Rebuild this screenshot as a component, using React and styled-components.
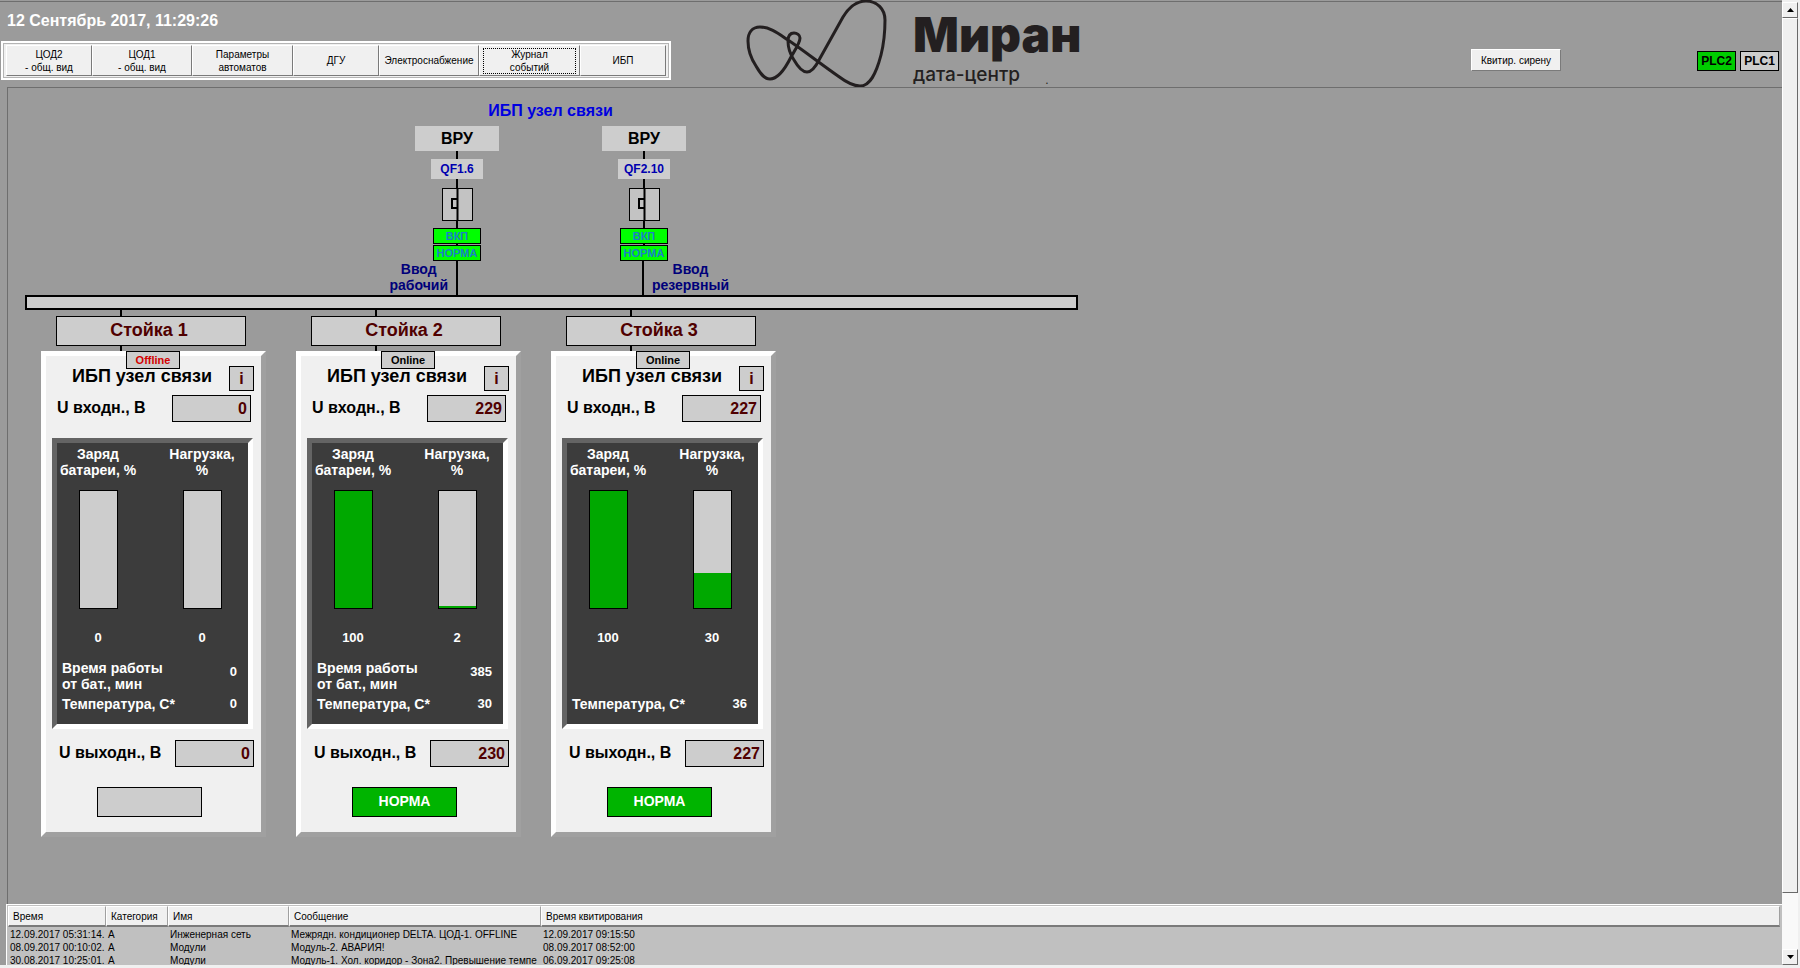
import React from 'react';
import styled, { createGlobalStyle } from 'styled-components';

const navItems = [
  { lines: ['ЦОД2', '- общ. вид'], width: 86 },
  { lines: ['ЦОД1', '- общ. вид'], width: 100 },
  { lines: ['Параметры', 'автоматов'], width: 101 },
  { lines: ['ДГУ'], width: 86 },
  { lines: ['Электроснабжение'], width: 100 },
  { lines: ['Журнал', 'событий'], width: 101, focused: true },
  { lines: ['ИБП'], width: 86 },
];

const feeds = [
  { breaker: 'QF1.6', label: ['Ввод', 'рабочий'], side: 'left' },
  { breaker: 'QF2.10', label: ['Ввод', 'резервный'], side: 'right' },
];

const racks = [
  { id: 1, online: false, input: 0, output: 0, charge: 0, load: 0, runtime: 0, temp: 0 },
  { id: 2, online: true, input: 229, output: 230, charge: 100, load: 2, runtime: 385, temp: 30 },
  { id: 3, online: true, input: 227, output: 227, charge: 100, load: 30, temp: 36 },
];

const events = [
  ['12.09.2017 05:31:14.', 'A', 'Инженерная сеть', 'Межрядн. кондиционер DELTA. ЦОД-1. OFFLINE', '12.09.2017 09:15:50'],
  ['08.09.2017 00:10:02.', 'A', 'Модули', 'Модуль-2. АВАРИЯ!', '08.09.2017 08:52:00'],
  ['30.08.2017 10:25:01.', 'A', 'Модули', 'Модуль-1. Хол. коридор - Зона2. Превышение темпе', '06.09.2017 09:25:08'],
];

const Lines = ({ lines }) =>
  lines.map((line, i) => (
    <React.Fragment key={line}>
      {i > 0 && <br />}
      {line}
    </React.Fragment>
  ));

const Logo = () => (
  <LogoWrap>
    <LogoMark viewBox="0 0 142 88" aria-hidden="true">
      <path
        d="M24 79 C33 79 40 67 45 57 C49 50 54 43 54 38 C54 35 51 33 48 33 C44 33 42 36 42 41 C42 47 44 54 48 60 C52 67 56 72 61 72 C66 72 70 66 73 60 L97 17 C103 7 110 1 120 1 C131 1 139 9 139 20 C139 32 138 43 135 55 C130 74 124 86 114 86 C107 86 100 82 92 76 C72 62 57 50 42 40 C33 34 24 27 14 27 C6 27 2 33 2 41 C2 50 6 60 10 66 C14 73 18 79 24 79 Z"
        fill="none"
        stroke="#231f20"
        strokeWidth="3"
        strokeLinejoin="round"
      />
    </LogoMark>
    <LogoText>
      <strong>Миран</strong>
      <span>дата-центр</span>
    </LogoText>
    <LogoDot>.</LogoDot>
  </LogoWrap>
);

const Feed = ({ feed }) => (
  <FeedColumn>
    <Source>ВРУ</Source>
    <Wire $height={8} />
    <BreakerName>{feed.breaker}</BreakerName>
    <Wire $height={9} />
    <Breaker>
      <svg width="29" height="31" viewBox="0 0 29 31" aria-hidden="true">
        <path d="M14.5 0 V31 M14 10 H9 V19 H14" fill="none" stroke="#000" strokeWidth="2" />
      </svg>
    </Breaker>
    <Wire $height={7} />
    <FeedState>ВКП</FeedState>
    <Wire $height={1} />
    <FeedState>НОРМА</FeedState>
    <FeedTail>
      <FeedLabel $side="left">{feed.side === 'left' && <Lines lines={feed.label} />}</FeedLabel>
      <Wire $height={34} />
      <FeedLabel $side="right">{feed.side === 'right' && <Lines lines={feed.label} />}</FeedLabel>
    </FeedTail>
  </FeedColumn>
);

const Gauge = ({ lines, value }) => (
  <GaugeColumn>
    <GaugeLabel>
      <Lines lines={lines} />
    </GaugeLabel>
    <GaugeBar>
      <GaugeFill style={{ height: `${value}%` }} />
    </GaugeBar>
    <span>{value}</span>
  </GaugeColumn>
);

const Rack = ({ rack }) => (
  <RackColumn>
    <RackWire $height={6} />
    <RackName>Стойка {rack.id}</RackName>
    <RackWire $height={5} />
    <Card>
      <Badge $online={rack.online}>{rack.online ? 'Online' : 'Offline'}</Badge>
      <CardHead>
        <h2>ИБП узел связи</h2>
        <InfoButton type="button">i</InfoButton>
      </CardHead>
      <InputRow>
        <label htmlFor={`in-${rack.id}`}>U входн., В</label>
        <Field id={`in-${rack.id}`} value={rack.input} readOnly />
      </InputRow>
      <Display>
        <Gauges>
          <Gauge lines={['Заряд', 'батареи, %']} value={rack.charge} />
          <Gauge lines={['Нагрузка,', '%']} value={rack.load} />
        </Gauges>
        <Reading>
          {rack.runtime !== undefined && (
            <>
              <p>
                <Lines lines={['Время работы', 'от бат., мин']} />
              </p>
              <span>{rack.runtime}</span>
            </>
          )}
        </Reading>
        <Reading $single>
          <p>Температура, С*</p>
          <span>{rack.temp}</span>
        </Reading>
      </Display>
      <OutputRow>
        <label htmlFor={`out-${rack.id}`}>U выходн., В</label>
        <Field id={`out-${rack.id}`} value={rack.output} readOnly />
      </OutputRow>
      <Status $ok={rack.online}>{rack.online && 'НОРМА'}</Status>
    </Card>
  </RackColumn>
);

const App = () => (
  <Screen>
    <GlobalStyle />
    <Content>
      <Header>
        <HeaderLeft>
          <Clock>12 Сентябрь 2017, 11:29:26</Clock>
          <Nav>
            {navItems.map((item) => (
              <NavButton key={item.lines.join()} type="button" $width={item.width}>
                <NavText $focused={item.focused}>
                  <Lines lines={item.lines} />
                </NavText>
              </NavButton>
            ))}
          </Nav>
        </HeaderLeft>
        <Logo />
        <HeaderRight>
          <SirenButton type="button">Квитир. сирену</SirenButton>
          <Plcs>
            <Plc $active>PLC2</Plc>
            <Plc>PLC1</Plc>
          </Plcs>
        </HeaderRight>
      </Header>
      <Panel>
        <Intake>
          <h1>ИБП узел связи</h1>
          <Feeds>
            {feeds.map((feed) => (
              <Feed key={feed.breaker} feed={feed} />
            ))}
          </Feeds>
        </Intake>
        <Bus />
        <Racks>
          {racks.map((rack) => (
            <Rack key={rack.id} rack={rack} />
          ))}
        </Racks>
      </Panel>
      <Journal>
        <EventTable>
          <colgroup>
            <col width="98" />
            <col width="62" />
            <col width="121" />
            <col width="252" />
            <col />
          </colgroup>
          <thead>
            <tr>
              <th>Время</th>
              <th>Категория</th>
              <th>Имя</th>
              <th>Сообщение</th>
              <th>Время квитирования</th>
            </tr>
          </thead>
          <tbody>
            {events.map((row) => (
              <tr key={row[0]}>
                {row.map((cell, i) => (
                  <td key={i}>{cell}</td>
                ))}
              </tr>
            ))}
          </tbody>
        </EventTable>
      </Journal>
    </Content>
    <Scrollbar>
      <ScrollButton type="button" aria-label="Вверх">
        <svg width="7" height="4" viewBox="0 0 7 4">
          <path d="M0 4 L3.5 0 L7 4 Z" />
        </svg>
      </ScrollButton>
      <ScrollTrack>
        <ScrollThumb />
      </ScrollTrack>
      <ScrollButton type="button" aria-label="Вниз">
        <svg width="7" height="4" viewBox="0 0 7 4">
          <path d="M0 0 L3.5 4 L7 0 Z" />
        </svg>
      </ScrollButton>
    </Scrollbar>
  </Screen>
);

export default App;

const GlobalStyle = createGlobalStyle`
  * {
    box-sizing: border-box;
  }
  body {
    margin: 0;
    background: #f0f0f0;
    color: #000;
    font-family: 'Liberation Sans', Arial, sans-serif;
  }
  h1, h2, p {
    margin: 0;
  }
  button, input {
    font-family: inherit;
    color: inherit;
    border-radius: 0;
    padding: 0;
  }
`;

const Screen = styled.div`
  display: flex;
  height: 100vh;
  padding: 0 2px 3px 0;
  overflow: hidden;
`;

const Content = styled.main`
  flex: 1;
  min-width: 0;
  display: flex;
  flex-direction: column;
  background: #9b9b9b;
`;

const Header = styled.header`
  display: flex;
  flex: none;
  height: 86px;
  margin-top: 1px;
  border-top: 1px solid #6e6e6e;
`;

const HeaderLeft = styled.div`
  padding: 9px 0 0 1px;
`;

const Clock = styled.div`
  width: 213px;
  margin-left: 6px;
  overflow: hidden;
  white-space: nowrap;
  color: #fff;
  font-size: 16px;
  font-weight: bold;
  line-height: 20px;
`;

const Nav = styled.nav`
  display: flex;
  margin-top: 10px;
  padding: 2px 3px;
  background: #f0f0f0;
  border: 2px solid #fff;
  outline: 1px solid #b4b4b4;
  outline-offset: -3px;
`;

const NavButton = styled.button`
  width: ${({ $width }) => $width}px;
  height: 31px;
  background: #f0f0f0;
  border: 1px solid;
  border-color: #fff #7a7a7a #7a7a7a #fff;
  font-size: 10px;
  line-height: 13px;
  white-space: nowrap;
`;

const NavText = styled.span`
  display: block;
  margin: 0 3px;
  outline: ${({ $focused }) => ($focused ? '1px dotted #000' : 'none')};
  outline-offset: -1px;
`;

const LogoWrap = styled.div`
  display: flex;
  margin-left: 75px;
  color: #231f20;
`;

const LogoMark = styled.svg`
  width: 142px;
  height: 88px;
  margin-top: -2px;
  overflow: visible;
`;

const LogoText = styled.div`
  display: flex;
  flex-direction: column;
  margin: 5px 0 0 25px;
  font-family: Inter, 'Open Sans', sans-serif;
  strong {
    font-size: 48px;
    font-weight: 900;
    line-height: 56px;
  }
  span {
    font-size: 19px;
    font-weight: 500;
    line-height: 24px;
  }
`;

const LogoDot = styled.span`
  align-self: flex-end;
  margin-left: -36px;
  font-size: 12px;
  line-height: 14px;
`;

const HeaderRight = styled.div`
  display: flex;
  align-items: flex-start;
  margin-left: auto;
  padding: 47px 3px 0 0;
`;

const SirenButton = styled.button`
  width: 90px;
  height: 22px;
  margin-right: 136px;
  background: #f0f0f0;
  border: 1px solid;
  border-color: #fff #7a7a7a #7a7a7a #fff;
  font-size: 10px;
`;

const Plcs = styled.div`
  display: flex;
  gap: 4px;
  margin-top: 2px;
`;

const Plc = styled.div`
  width: 39px;
  height: 20px;
  border: 1px solid #000;
  background: ${({ $active }) => ($active ? '#00cc00' : '#cdcdcd')};
  font-size: 12px;
  font-weight: bold;
  line-height: 18px;
  text-align: center;
`;

const Panel = styled.section`
  flex: 1;
  min-height: 0;
  margin-left: 7px;
  padding-top: 13px;
  border: solid #6e6e6e;
  border-width: 1px 0 0 1px;
  overflow: hidden;
`;

const Intake = styled.div`
  width: max-content;
  margin-left: 356px;
  h1 {
    margin-bottom: 5px;
    color: #0000e0;
    font-size: 16px;
    line-height: 20px;
    text-align: center;
  }
`;

const Feeds = styled.div`
  display: flex;
  gap: 1px;
`;

const FeedColumn = styled.div`
  display: flex;
  flex-direction: column;
  align-items: center;
  width: 186px;
`;

const Wire = styled.div`
  width: 2px;
  height: ${({ $height }) => $height}px;
  background: #000;
`;

const Source = styled.div`
  width: 84px;
  background: #cdcdcd;
  font-size: 16px;
  font-weight: bold;
  line-height: 25px;
  text-align: center;
`;

const BreakerName = styled.div`
  width: 52px;
  background: #cdcdcd;
  color: #0000b0;
  font-size: 12px;
  font-weight: bold;
  line-height: 20px;
  text-align: center;
`;

const Breaker = styled.div`
  width: 31px;
  height: 33px;
  border: 1px solid #000;
  background: #c3c3c3;
  svg {
    display: block;
  }
`;

const FeedState = styled.div`
  width: 48px;
  border: 1px solid #000;
  background: #00ff00;
  color: #1a80c8;
  font-size: 11px;
  font-weight: bold;
  line-height: 14px;
  text-align: center;
  white-space: nowrap;
`;

const FeedTail = styled.div`
  display: grid;
  grid-template-columns: 1fr 2px 1fr;
  width: 100%;
`;

const FeedLabel = styled.div`
  justify-self: ${({ $side }) => ($side === 'left' ? 'end' : 'start')};
  padding: 0 8px;
  color: #00007a;
  font-size: 14px;
  font-weight: bold;
  line-height: 16px;
  text-align: center;
`;

const Bus = styled.div`
  max-width: 1053px;
  height: 15px;
  margin-left: 17px;
  border: 2px solid #000;
  background: #cdcdcd;
`;

const Racks = styled.div`
  display: flex;
  gap: 30px;
  margin-left: 33px;
`;

const RackColumn = styled.section`
  width: 225px;
`;

const RackWire = styled(Wire)`
  margin-left: 79px;
`;

const RackName = styled.div`
  width: 190px;
  margin-left: 15px;
  border: 1px solid #000;
  background: #cdcdcd;
  color: #500000;
  font-size: 18px;
  font-weight: bold;
  line-height: 26px;
  padding: 0 4px 2px 0;
  text-align: center;
`;

const Card = styled.div`
  position: relative;
  padding-bottom: 15px;
  background: #f0f0f0;
  border: 5px solid;
  border-color: #fff #a0a0a0 #a0a0a0 #fff;
`;

const Badge = styled.div`
  position: absolute;
  top: -5px;
  left: 80px;
  width: 54px;
  border: 1px solid #000;
  background: #cdcdcd;
  color: ${({ $online }) => ($online ? '#000' : '#d40000')};
  font-size: 11px;
  font-weight: bold;
  line-height: 16px;
  text-align: center;
`;

const CardHead = styled.div`
  display: flex;
  align-items: flex-start;
  justify-content: space-between;
  padding: 10px 7px 0 26px;
  h2 {
    font-size: 18px;
    line-height: 20px;
    white-space: nowrap;
  }
`;

const InfoButton = styled.button`
  width: 25px;
  height: 25px;
  border: 1px solid #000;
  background: #cdcdcd;
  color: #500000;
  font-size: 16px;
  font-weight: bold;
`;

const FieldRow = styled.div`
  display: flex;
  justify-content: space-between;
  font-size: 16px;
  font-weight: bold;
  line-height: 25px;
`;

const InputRow = styled(FieldRow)`
  margin: 4px 10px 16px 11px;
`;

const OutputRow = styled(FieldRow)`
  margin: 11px 7px 20px 13px;
`;

const Field = styled.input`
  width: 79px;
  height: 27px;
  padding-right: 3px;
  border: 1px solid #000;
  background: #cdcdcd;
  color: #500000;
  font-size: 16px;
  font-weight: bold;
  text-align: right;
`;

const Display = styled.div`
  margin: 0 8px 0 6px;
  padding: 3px 0 8px;
  border: 5px solid;
  border-color: #646464 #fff #fff #646464;
  background: #3c3c3c;
  color: #fff;
  font-size: 13px;
  font-weight: bold;
  line-height: 16px;
`;

const Gauges = styled.div`
  display: flex;
  gap: 22px;
`;

const GaugeColumn = styled.div`
  display: flex;
  flex-direction: column;
  align-items: center;
  width: 82px;
`;

const GaugeLabel = styled.div`
  font-size: 14px;
  text-align: center;
  white-space: nowrap;
`;

const GaugeBar = styled.div`
  display: flex;
  align-items: flex-end;
  width: 39px;
  height: 119px;
  margin: 12px 0 21px;
  border: 1px solid #000;
  background: #cdcdcd;
`;

const GaugeFill = styled.div`
  width: 100%;
  background: #00a800;
`;

const Reading = styled.div`
  display: flex;
  justify-content: space-between;
  height: ${({ $single }) => ($single ? 24 : 32)}px;
  margin-top: ${({ $single }) => ($single ? 0 : 14)}px;
  padding: 0 11px 0 5px;
  p {
    font-size: 14px;
    line-height: ${({ $single }) => ($single ? 24 : 16)}px;
  }
  span {
    line-height: 24px;
  }
`;

const Status = styled.div`
  width: 105px;
  height: 30px;
  margin: 0 auto 0 51px;
  border: 1px solid #000;
  background: ${({ $ok }) => ($ok ? '#00b400' : '#cdcdcd')};
  color: #fff;
  font-size: 14px;
  font-weight: bold;
  line-height: 27px;
  text-align: center;
`;

const Journal = styled.section`
  flex: none;
  height: 61px;
  margin-left: 6px;
  padding: 1px 2px 0 1px;
  border: solid #fff;
  border-width: 1px 0 0 1px;
  background: #c0c0c0;
  overflow: hidden;
`;

const EventTable = styled.table`
  width: 100%;
  table-layout: fixed;
  border-collapse: separate;
  border-spacing: 0;
  font-size: 10px;
  th,
  td {
    white-space: nowrap;
    text-align: left;
    font-weight: normal;
  }
  th {
    height: 21px;
    padding: 0 4px;
    background: #f0f0f0;
    border: solid;
    border-width: 1px 1px 2px 1px;
    border-color: #fff #a0a0a0 #7a7a7a #fff;
  }
  td {
    height: 13px;
    padding: 0 0 0 2px;
    line-height: 13px;
  }
  tbody tr:first-child td {
    height: 14px;
    padding-top: 1px;
  }
`;

const Scrollbar = styled.div`
  display: flex;
  flex: none;
  flex-direction: column;
  width: 16px;
  padding-top: 2px;
`;

const ScrollButton = styled.button`
  display: flex;
  align-items: center;
  justify-content: center;
  height: 16px;
  background: #f0f0f0;
  border: 1px solid;
  border-color: #fff #696969 #696969 #fff;
`;

const ScrollTrack = styled.div`
  flex: 1;
  background: #f9f9f9;
`;

const ScrollThumb = styled.div`
  height: 94%;
  background: #f0f0f0;
  border: 1px solid;
  border-color: #fff #696969 #696969 #fff;
`;
